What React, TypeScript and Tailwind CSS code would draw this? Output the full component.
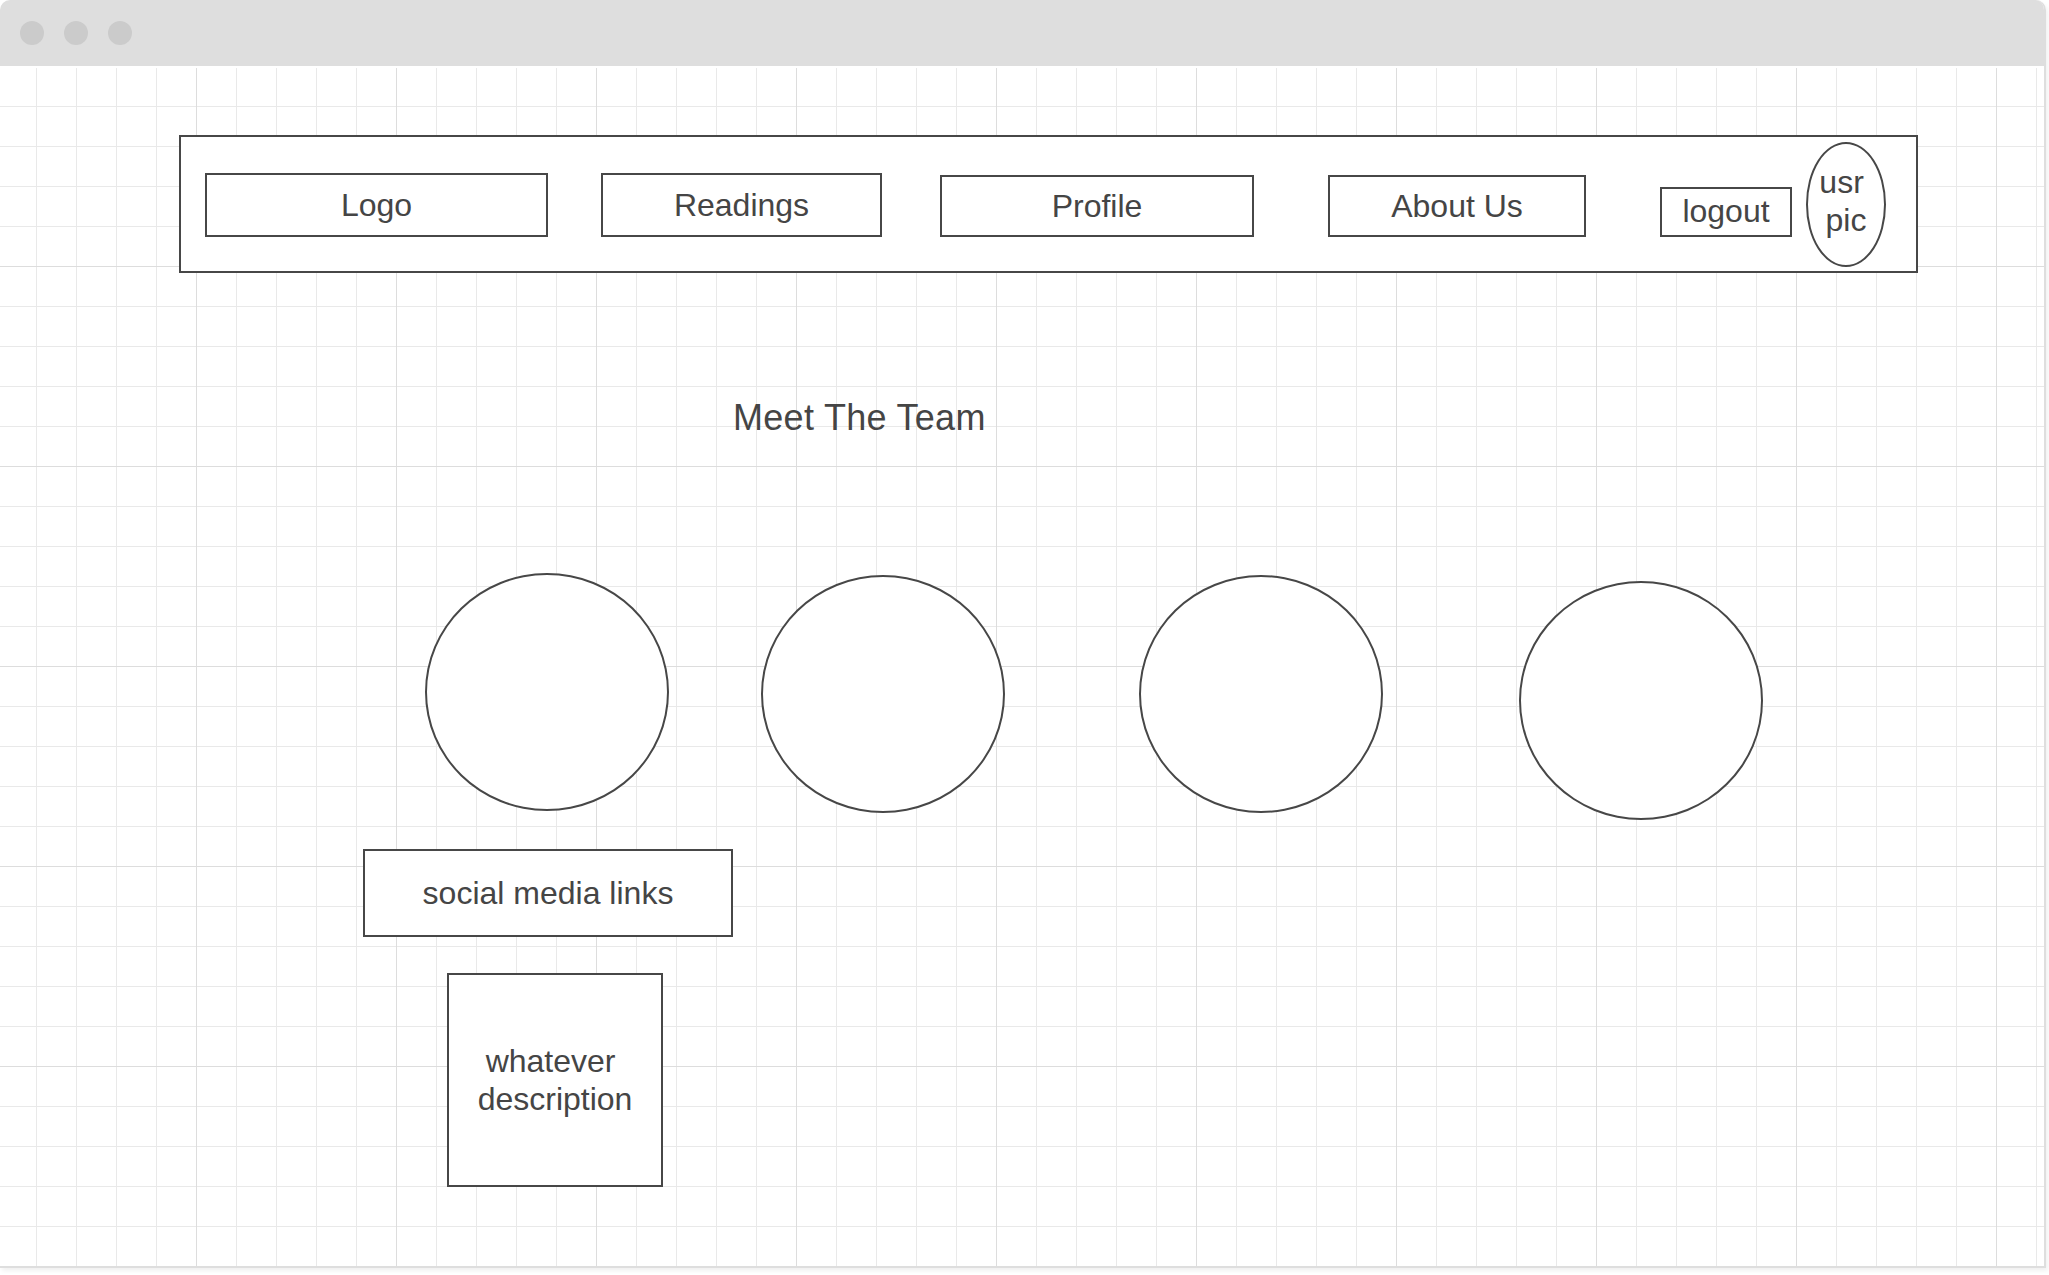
import React from 'react';

const box =
  'border-2 border-[#474747] bg-white flex items-center justify-center text-[32px] text-[#454545] shrink-0';

const MeetTheTeam = () => {
  return (
    <div className="w-[2049px] h-[1275px] bg-white font-['Liberation_Sans',Arial,sans-serif] overflow-hidden">
      <div className="w-[2046px] h-[1268px] flex flex-col rounded-t-[10px] overflow-hidden border-r-2 border-b-2 border-[#dedede] shadow-[2px_3px_4px_rgba(0,0,0,0.06)]">
        {/* Title bar */}
        <div className="h-[66px] shrink-0 bg-[#dedede] flex items-center gap-[20px] pl-[20px]">
          <div className="w-6 h-6 rounded-full bg-[#cbcbcb]" />
          <div className="w-6 h-6 rounded-full bg-[#cbcbcb]" />
          <div className="w-6 h-6 rounded-full bg-[#cbcbcb]" />
        </div>

        {/* Canvas with grid */}
        <div className="flex-1 flex flex-col items-start border-t-2 border-white bg-white bg-[image:linear-gradient(to_right,#dddddd_1px,transparent_1px),linear-gradient(to_bottom,#dddddd_1px,transparent_1px),linear-gradient(to_right,#e9e9e9_1px,transparent_1px),linear-gradient(to_bottom,#e9e9e9_1px,transparent_1px)] bg-size-[200px_200px,200px_200px,40px_40px,40px_40px] bg-position-[196px_0,0_198px,36px_0,0_38px]">
          {/* Nav */}
          <div className="ml-[179px] mt-[67px] w-[1739px] h-[138px] border-2 border-[#474747] bg-white flex items-start pl-[24px]">
            <div className={`${box} mt-[36px] w-[343px] h-[64px]`}>Logo</div>
            <div className={`${box} mt-[36px] ml-[53px] w-[281px] h-[64px]`}>Readings</div>
            <div className={`${box} mt-[38px] ml-[58px] w-[314px] h-[62px]`}>Profile</div>
            <div className={`${box} mt-[38px] ml-[74px] w-[258px] h-[62px]`}>About Us</div>
            <div className={`${box} mt-[50px] ml-[74px] w-[132px] h-[50px] pb-[2px]`}>logout</div>
            <div className="mt-[5px] ml-[14px] w-[80px] h-[125px] shrink-0 rounded-[50%] border-2 border-[#474747] bg-white flex flex-col items-center justify-center pb-[7px] text-[32px] leading-[38px] text-[#454545]">
              <span>usr{'\u00a0'}</span>
              <span>pic</span>
            </div>
          </div>

          {/* Heading */}
          <h1 className="ml-[733px] mt-[127px] text-[36px] leading-none tracking-[0.3px] text-[#454545]">Meet The Team</h1>

          {/* Team circles */}
          <div className="ml-[425px] mt-[137px] flex items-start">
            <div className="w-[244px] h-[238px] rounded-[50%] border-2 border-[#474747] bg-white" />
            <div className="ml-[92px] mt-[2px] w-[244px] h-[238px] rounded-[50%] border-2 border-[#474747] bg-white" />
            <div className="ml-[134px] mt-[2px] w-[244px] h-[238px] rounded-[50%] border-2 border-[#474747] bg-white" />
            <div className="ml-[136px] mt-[8px] w-[244px] h-[239px] rounded-[50%] border-2 border-[#474747] bg-white" />
          </div>

          <div className={`${box} ml-[363px] mt-[29px] w-[370px] h-[88px]`}>social media links</div>

          <div className={`${box} ml-[447px] mt-[36px] w-[216px] h-[214px] flex-col leading-[38px]`}>
            <span>whatever{'\u00a0'}</span>
            <span>description</span>
          </div>
        </div>
      </div>
    </div>
  );
};

export default function App() {
  return <MeetTheTeam />;
}
